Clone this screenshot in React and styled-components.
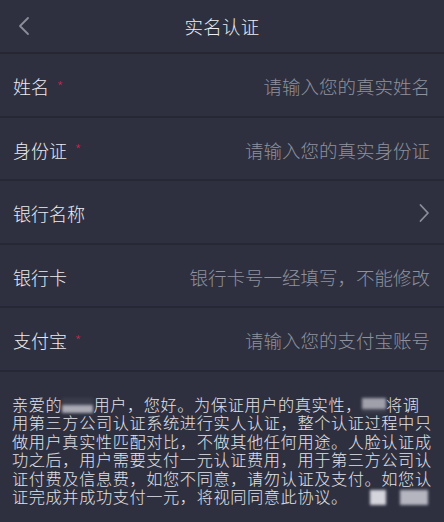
import React from 'react';
import styled, { createGlobalStyle } from 'styled-components';

const Global = createGlobalStyle`
  html, body {
    margin: 0;
    padding: 0;
    background: #2e3040;
  }
  body {
    font-family: "Noto Sans CJK SC", "Noto Sans", sans-serif;
    font-weight: 300;
  }
`;

const Page = styled.div`
  width: 444px;
  height: 522px;
  background: #2e3040;
  overflow: hidden;
  color: #e6e6ec;
`;

const Header = styled.header`
  position: relative;
  height: 52px;
  display: flex;
  align-items: center;
  justify-content: center;
  border-bottom: 2px solid #262733;
`;

const Back = styled.button`
  position: absolute;
  left: 12px;
  top: 14px;
  width: 24px;
  height: 24px;
  padding: 0;
  border: 0;
  background: none;
  display: flex;
  align-items: center;
  justify-content: center;
`;

const Title = styled.h1`
  margin: 0;
  font-size: 18.5px;
  font-weight: 300;
  color: #ececf2;
  letter-spacing: 0.3px;
`;

const Row = styled.div`
  height: 58.5px;
  padding: 3px 14px 0 13px;
  display: flex;
  align-items: center;
  justify-content: space-between;
  border-bottom: 2px solid #272835;
`;

const Label = styled.span`
  font-size: 18px;
  color: #ebebf0;
  display: flex;
  align-items: center;
`;

const Star = styled.span`
  color: #c0284c;
  font-size: 15px;
  margin-left: 8px;
  filter: blur(0.5px);
`;

const Placeholder = styled.span`
  font-size: 18.5px;
  color: #8f919c;
`;

const Notice = styled.div`
  padding: 24px 12px 0 12px;
  font-family: "Liberation Sans", "Noto Sans CJK SC", sans-serif;
  font-size: 16.2px;
  letter-spacing: 0.6px;
  line-height: 18.6px;
  color: #e2e2e8;
`;

const Line = styled.div`
  white-space: nowrap;
`;

const Mask = styled.span`
  display: inline-block;
  width: ${(p) => p.w}px;
  height: 15px;
  vertical-align: -2px;
  background: ${(p) => p.bg};
  filter: blur(1.5px);
  margin-left: ${(p) => p.ml || 0}px;
`;

const BackIcon = () => (
  <svg width="14" height="20" viewBox="0 0 14 20" fill="none">
    <path d="M11 2 L3 10 L11 18" stroke="#8b8d99" strokeWidth="1.8" strokeLinecap="round" strokeLinejoin="round" />
  </svg>
);

const Chevron = () => (
  <svg width="12" height="20" viewBox="0 0 12 20" fill="none">
    <path d="M2.5 2 L10 10 L2.5 18" stroke="#8b8d99" strokeWidth="1.8" strokeLinecap="round" strokeLinejoin="round" />
  </svg>
);

const fields = [
  { label: '姓名', required: true, hint: '请输入您的真实姓名' },
  { label: '身份证', required: true, hint: '请输入您的真实身份证' },
  { label: '银行名称', arrow: true },
  { label: '银行卡', hint: '银行卡号一经填写，不能修改' },
  { label: '支付宝', required: true, hint: '请输入您的支付宝账号' },
];

export default function App() {
  return (
    <Page>
      <Global />
      <Header>
        <Back aria-label="返回">
          <BackIcon />
        </Back>
        <Title>实名认证</Title>
      </Header>
      {fields.map((f) => (
        <Row key={f.label}>
          <Label>
            {f.label}
            {f.required && <Star>*</Star>}
          </Label>
          {f.hint && <Placeholder>{f.hint}</Placeholder>}
          {f.arrow && <Chevron />}
        </Row>
      ))}
      <Notice>
        <Line>
          亲爱的
          <Mask w={31} bg="linear-gradient(#3a3c4c 0 45%, #a9aab4 45%)" />
          用户，您好。为保证用户的真实性，
          <Mask w={24} bg="linear-gradient(#9fa0aa 0 75%, #3a3c4c 75%)" />
          将调
        </Line>
        用第三方公司认证系统进行实人认证，整个认证过程中只做用户真实性匹配对比，不做其他任何用途。人脸认证成功之后，用户需要支付一元认证费用，用于第三方公司认证付费及信息费，如您不同意，请勿认证及支付。如您认证完成并成功支付一元，将视同同意此协议。
        <Mask w={16} ml={22} bg="#d4d4dc" />
        <Mask w={28} ml={14} bg="#b4b5bf" />
      </Notice>
    </Page>
  );
}
